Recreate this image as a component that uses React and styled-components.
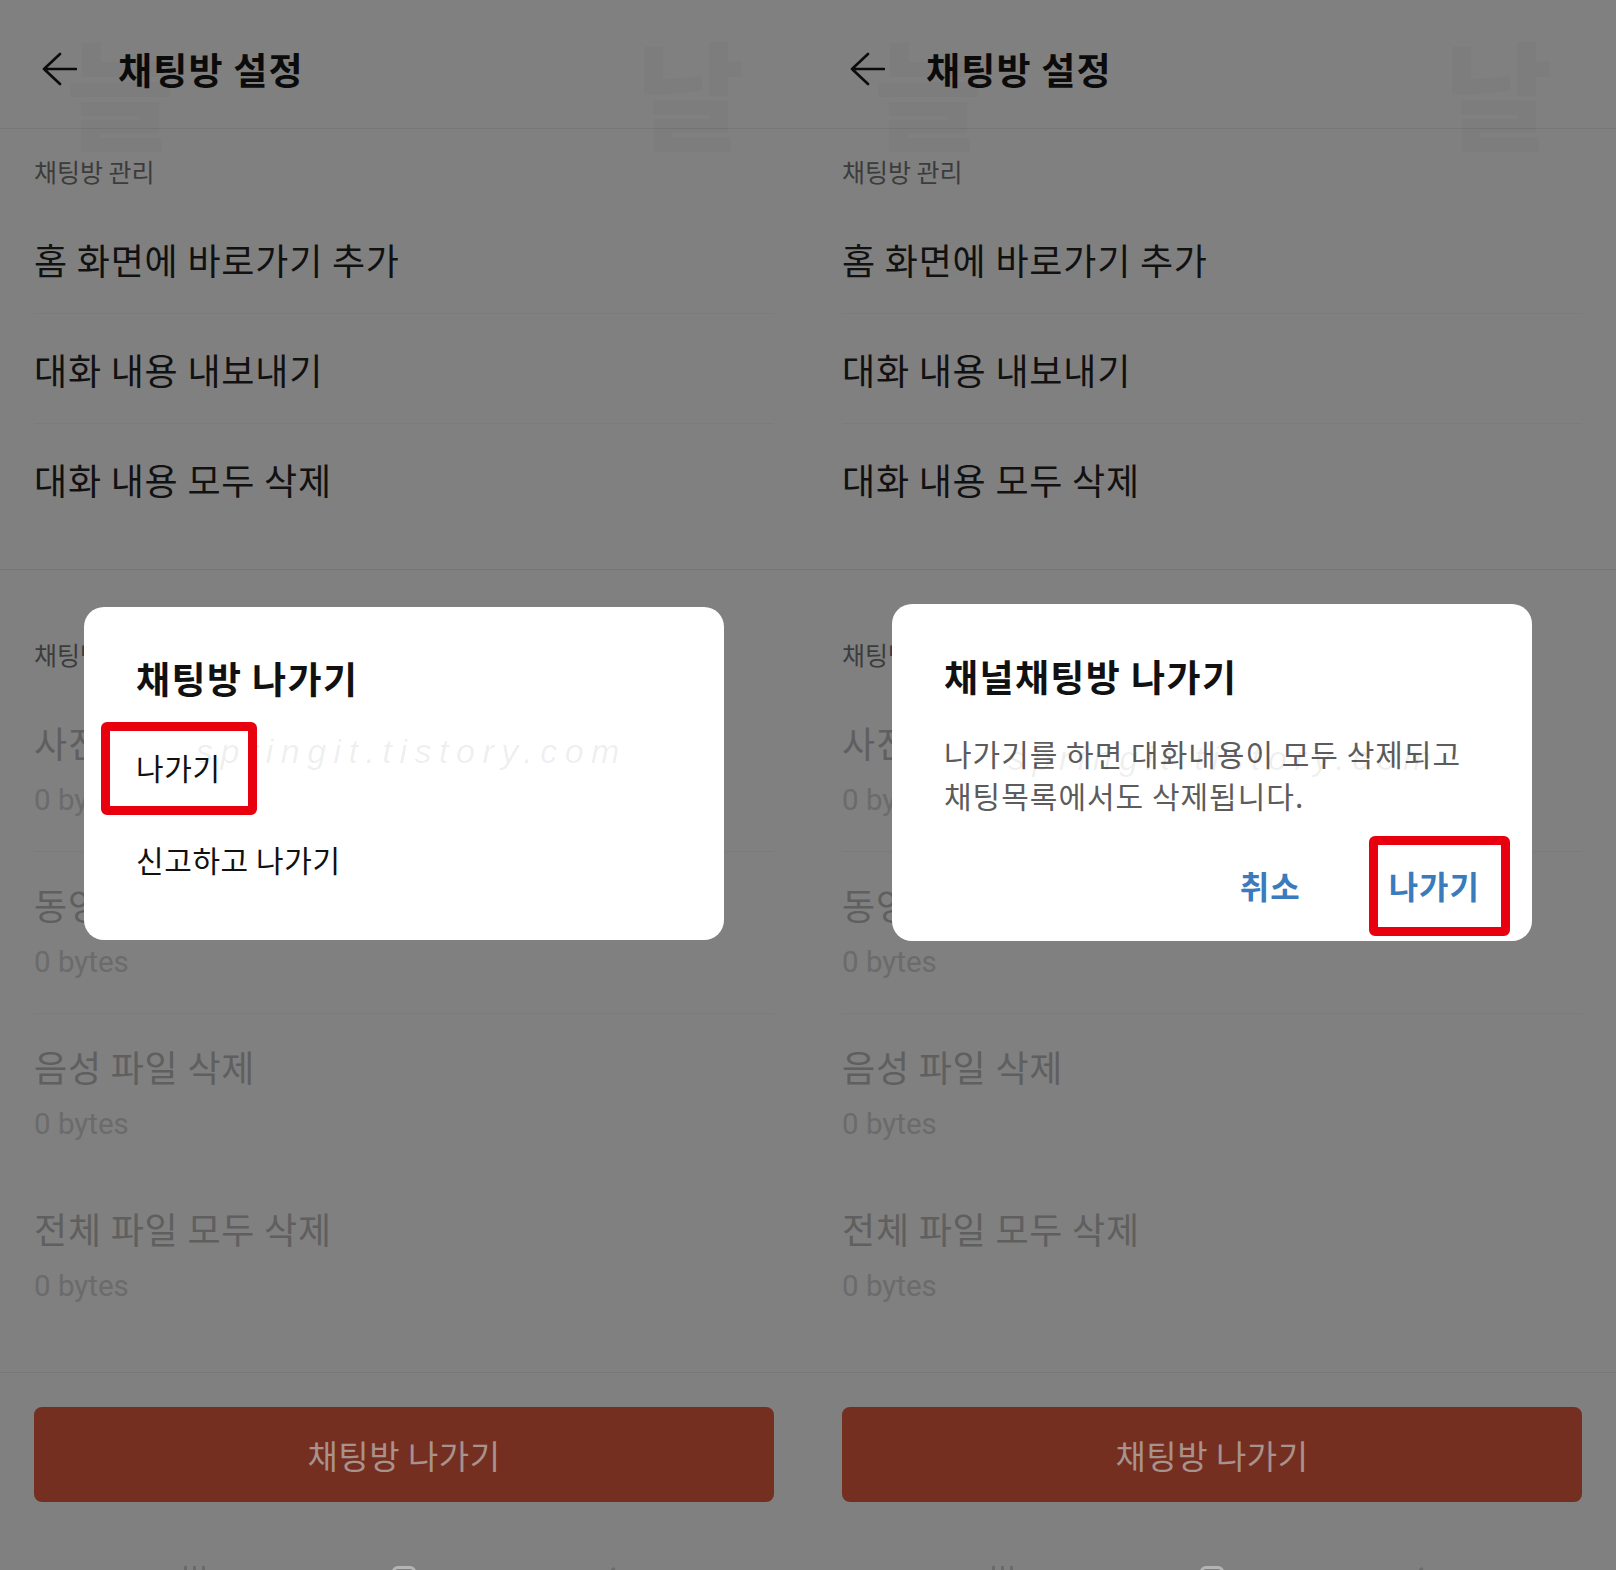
import React from "react";
import styled, { createGlobalStyle } from "styled-components";

const GlobalStyle = createGlobalStyle`
  html, body {
    margin: 0;
    padding: 0;
    background: #808080;
  }
  body {
    font-family: "Noto Sans CJK KR", "Noto Sans", sans-serif;
  }
`;

const Page = styled.div`
  display: flex;
  width: 1616px;
  height: 1570px;
  overflow: hidden;
`;

const Screen = styled.section`
  position: relative;
  width: 808px;
  height: 1570px;
  display: flex;
  flex-direction: column;
  background: #808080;
  overflow: hidden;

  & > * {
    flex-shrink: 0;
  }
`;

// faint ghost letters left over in the capture
const Ghost = styled.span`
  position: absolute;
  left: ${({ $left }) => $left}px;
  top: ${({ $top }) => $top}px;
  font-size: 118px;
  line-height: 1;
  font-weight: 900;
  color: rgba(0, 0, 0, 0.02);
  pointer-events: none;
`;

const Header = styled.header`
  box-sizing: border-box;
  height: 129px;
  padding: 10px 0 0 41px;
  display: flex;
  align-items: center;
  gap: 41px;
  border-bottom: 1px solid #777777;
`;

const Title = styled.h1`
  margin: 0;
  font-size: 37px;
  line-height: 44px;
  letter-spacing: 1.2px;
  font-weight: 700;
  color: #0b0b0b;
`;

const Section = styled.div`
  padding-bottom: ${({ $bottom }) => $bottom || 0}px;
  border-bottom: ${({ $divider }) => ($divider ? "1px solid #767676" : "none")};
`;

const SectionLabel = styled.div`
  padding: ${({ $top }) => $top}px 34px ${({ $bottom }) => $bottom}px;
  font-size: 25px;
  line-height: 30px;
  color: #3c3c3c;
`;

const ActionRow = styled.div`
  box-sizing: border-box;
  height: 110px;
  margin: 0 34px;
  display: flex;
  align-items: center;
  font-size: 36px;
  letter-spacing: 0.8px;
  color: #111111;
  border-bottom: 1px solid ${({ $last }) => ($last ? "transparent" : "#7b7b7b")};
`;

const StorageItem = styled.div`
  box-sizing: border-box;
  height: 162px;
  margin: 0 34px;
  padding-top: 32px;
  border-bottom: 1px solid ${({ $line }) => ($line ? "#7b7b7b" : "transparent")};
`;

const ItemTitle = styled.div`
  font-size: 36px;
  line-height: 40px;
  letter-spacing: 0.8px;
  color: #5f5f5f;
`;

const ItemSize = styled.div`
  margin-top: 20px;
  font-family: Roboto, "Liberation Sans", sans-serif;
  font-size: 29.5px;
  line-height: 36px;
  color: #6b6b6b;
`;

const Footer = styled.footer`
  margin-top: 34px;
  border-top: 1px solid #777777;
  padding: 34px 34px 0;
`;

const LeaveButton = styled.button`
  display: block;
  width: 100%;
  height: 95px;
  border: 0;
  border-radius: 8px;
  background: #752f20;
  color: #a8928d;
  font-family: inherit;
  font-size: 33px;
  letter-spacing: 0.5px;
`;

const NavBar = styled.nav`
  box-sizing: border-box;
  height: 68px;
  display: grid;
  grid-template-columns: repeat(3, 1fr);
  justify-items: center;
  align-items: start;
  padding: 64px 90px 0;
  overflow: hidden;
`;

const NavBars = styled.div`
  display: flex;
  gap: 6px;
  & > i {
    width: 3px;
    height: 20px;
    background: #6a6a6a;
  }
`;

const NavHome = styled.div`
  width: 18px;
  height: 18px;
  border: 3px solid #b4b4b4;
  border-radius: 6px;
`;

const NavBack = styled.div`
  width: 12px;
  height: 12px;
  margin-top: 4px;
  border-left: 3px solid #6a6a6a;
  border-bottom: 3px solid #6a6a6a;
  transform: rotate(45deg);
`;

const Dialog = styled.div`
  position: absolute;
  top: ${({ $top }) => $top}px;
  left: 84px;
  width: 640px;
  box-sizing: border-box;
  padding: ${({ $pad }) => $pad};
  background: #ffffff;
  border-radius: 20px;
`;

const DialogTitle = styled.h2`
  margin: 0;
  font-size: 37px;
  line-height: 44px;
  letter-spacing: 1.4px;
  font-weight: 700;
  color: #111111;
`;

const OptionList = styled.ul`
  list-style: none;
  margin: 21px 0 0;
  padding: 0;
`;

const Option = styled.li`
  height: 92px;
  display: flex;
  align-items: center;
  font-size: 30px;
  letter-spacing: 0.6px;
  color: #111111;
`;

const Message = styled.p`
  margin: 35px 0 0;
  font-size: 30px;
  line-height: 41.5px;
  letter-spacing: 1px;
  color: #5c5c5c;
`;

const Actions = styled.div`
  margin-top: 39px;
  height: 60px;
  display: flex;
  justify-content: flex-end;
  align-items: center;
  gap: 88px;
`;

const ActionButton = styled.button`
  border: 0;
  padding: 0;
  background: none;
  font-family: inherit;
  font-size: 32px;
  line-height: 40px;
  letter-spacing: 1px;
  font-weight: 700;
  color: #3a7bbd;
`;

const Marked = styled.span`
  position: relative;
  display: inline-block;
  line-height: 40px;
`;

const RedBox = styled.span`
  position: absolute;
  top: ${({ $t }) => $t}px;
  right: ${({ $r }) => $r}px;
  bottom: ${({ $b }) => $b}px;
  left: ${({ $l }) => $l}px;
  border: 9px solid #e8000e;
  border-radius: 6px;
`;

const Watermark = styled.span`
  position: absolute;
  left: ${({ $left }) => $left}px;
  top: ${({ $top }) => $top}px;
  font-family: "Liberation Sans", sans-serif;
  font-style: italic;
  font-weight: 300;
  font-size: 34px;
  letter-spacing: 7.5px;
  color: rgba(0, 0, 0, 0.07);
  white-space: nowrap;
  pointer-events: none;
`;

function BackArrow() {
  return (
    <svg width="36" height="34" viewBox="0 0 36 34" fill="none">
      <path
        d="M35 17H3M19 2L3 17l16 15"
        stroke="#0b0b0b"
        strokeWidth="2.6"
        strokeLinecap="round"
        strokeLinejoin="round"
      />
    </svg>
  );
}

const manageItems = ["홈 화면에 바로가기 추가", "대화 내용 내보내기", "대화 내용 모두 삭제"];
const storageItems = ["사진 파일 삭제", "동영상 파일 삭제", "음성 파일 삭제", "전체 파일 모두 삭제"];

function SettingsScreen({ children }) {
  return (
    <Screen>
      <Ghost $left={66} $top={32}>늘</Ghost>
      <Ghost $left={636} $top={32}>날</Ghost>
      <Header>
        <BackArrow />
        <Title>채팅방 설정</Title>
      </Header>

      <Section $divider $bottom={35}>
        <SectionLabel $top={27} $bottom={18}>채팅방 관리</SectionLabel>
        {manageItems.map((item, i) => (
          <ActionRow key={item} $last={i === manageItems.length - 1}>
            {item}
          </ActionRow>
        ))}
      </Section>

      <Section>
        <SectionLabel $top={69} $bottom={21}>채팅방 저장공간 관리</SectionLabel>
        {storageItems.map((item, i) => (
          <StorageItem key={item} $line={i < 2}>
            <ItemTitle>{item}</ItemTitle>
            <ItemSize>0 bytes</ItemSize>
          </StorageItem>
        ))}
      </Section>

      <Footer>
        <LeaveButton>채팅방 나가기</LeaveButton>
      </Footer>

      <NavBar>
        <NavBars>
          <i />
          <i />
          <i />
        </NavBars>
        <NavHome />
        <NavBack />
      </NavBar>

      {children}
    </Screen>
  );
}

function LeaveOptionsDialog() {
  return (
    <Dialog $top={607} $pad="49px 52px 35px">
      <DialogTitle>채팅방 나가기</DialogTitle>
      <Watermark $left={112} $top={125}>springit.tistory.com</Watermark>
      <OptionList>
        <Option>
          <Marked>
            나가기
            <RedBox $t={-25} $r={-36} $b={-28} $l={-35} />
          </Marked>
        </Option>
        <Option>신고하고 나가기</Option>
      </OptionList>
    </Dialog>
  );
}

function ConfirmDialog() {
  return (
    <Dialog $top={604} $pad="50px 52px 26px">
      <DialogTitle>채널채팅방 나가기</DialogTitle>
      <Message>
        나가기를 하면 대화내용이 모두 삭제되고
        <br />
        채팅목록에서도 삭제됩니다.
      </Message>
      <Watermark $left={116} $top={135}>springit.tistory.com</Watermark>
      <Actions>
        <ActionButton>취소</ActionButton>
        <ActionButton>
          <Marked>
            나가기
            <RedBox $t={-29} $r={-30} $b={-31} $l={-20} />
          </Marked>
        </ActionButton>
      </Actions>
    </Dialog>
  );
}

export default function App() {
  return (
    <>
      <GlobalStyle />
      <Page>
        <SettingsScreen>
          <LeaveOptionsDialog />
        </SettingsScreen>
        <SettingsScreen>
          <ConfirmDialog />
        </SettingsScreen>
      </Page>
    </>
  );
}
